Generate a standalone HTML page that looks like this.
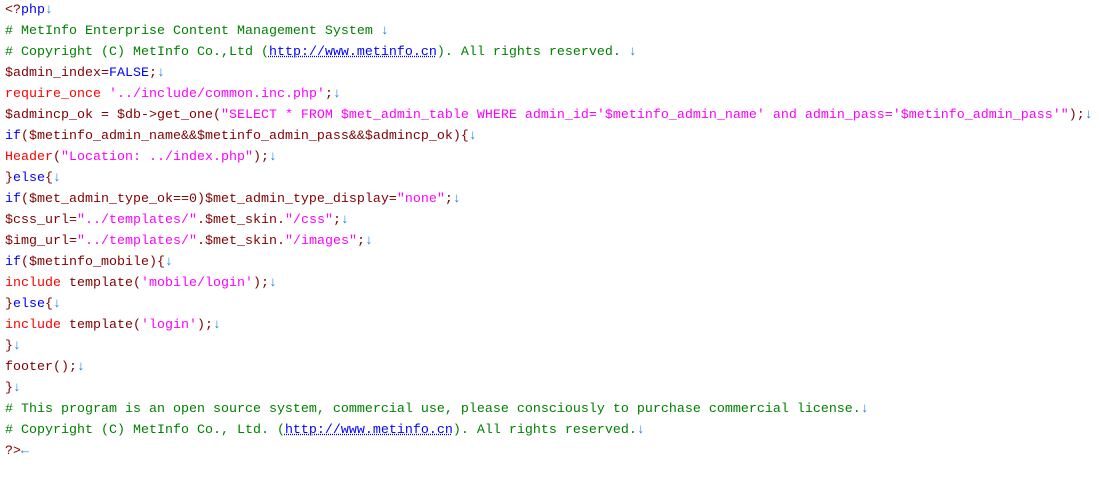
<!DOCTYPE html>
<html><head><meta charset="utf-8"><style>
html,body{margin:0;padding:0;background:#fff;width:1100px;height:500px;overflow:hidden}
pre{margin:0;padding:0 0 0 5px;position:relative;top:0px;font-family:"Liberation Mono","Noto Sans CJK SC",monospace;font-size:13.33px;line-height:21px;color:#800000;white-space:pre}
.k{color:#0000ff}.s{color:#ff00ff}.f{color:#ff0000}.c{color:#008000}.a{color:#1e7fe6}
.u{color:#0000ff;text-decoration:underline dotted #0000ff}
</style></head><body><pre>&lt;?<span class="k">php</span><span class="a">↓</span>
<span class="c"># MetInfo Enterprise Content Management System </span><span class="a">↓</span>
<span class="c"># Copyright (C) MetInfo Co.,Ltd (<span class="u">http://www.metinfo.cn</span>). All rights reserved. </span><span class="a">↓</span>
$admin_index=<span class="k">FALSE</span>;<span class="a">↓</span>
<span class="f">require_once</span> <span class="s">'../include/common.inc.php'</span>;<span class="a">↓</span>
$admincp_ok = $db-&gt;get_one(<span class="s">"SELECT * FROM $met_admin_table WHERE admin_id='$metinfo_admin_name' and admin_pass='$metinfo_admin_pass'"</span>);<span class="a">↓</span>
<span class="k">if</span>($metinfo_admin_name&amp;&amp;$metinfo_admin_pass&amp;&amp;$admincp_ok){<span class="a">↓</span>
<span class="f">Header</span>(<span class="s">"Location: ../index.php"</span>);<span class="a">↓</span>
}<span class="k">else</span>{<span class="a">↓</span>
<span class="k">if</span>($met_admin_type_ok==0)$met_admin_type_display=<span class="s">"none"</span>;<span class="a">↓</span>
$css_url=<span class="s">"../templates/"</span>.$met_skin.<span class="s">"/css"</span>;<span class="a">↓</span>
$img_url=<span class="s">"../templates/"</span>.$met_skin.<span class="s">"/images"</span>;<span class="a">↓</span>
<span class="k">if</span>($metinfo_mobile){<span class="a">↓</span>
<span class="f">include</span> template(<span class="s">'mobile/login'</span>);<span class="a">↓</span>
}<span class="k">else</span>{<span class="a">↓</span>
<span class="f">include</span> template(<span class="s">'login'</span>);<span class="a">↓</span>
}<span class="a">↓</span>
footer();<span class="a">↓</span>
}<span class="a">↓</span>
<span class="c"># This program is an open source system, commercial use, please consciously to purchase commercial license.</span><span class="a">↓</span>
<span class="c"># Copyright (C) MetInfo Co., Ltd. (<span class="u">http://www.metinfo.cn</span>). All rights reserved.</span><span class="a">↓</span>
?&gt;<span class="a">←</span></pre></body></html>
